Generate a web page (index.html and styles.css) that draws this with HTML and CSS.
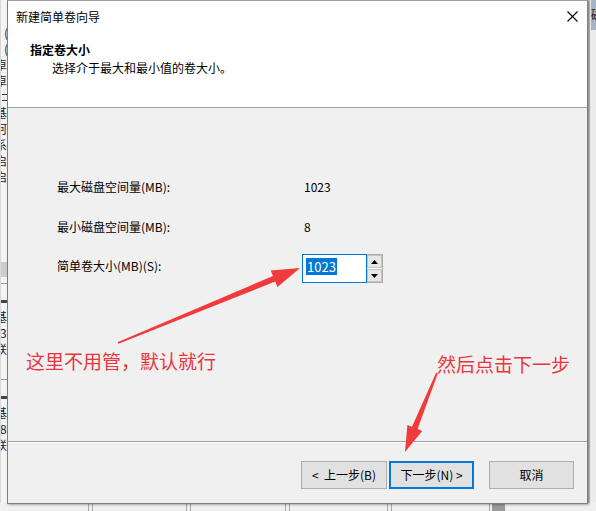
FILE: index.html
```html
<!DOCTYPE html>
<html lang="zh-CN">
<head>
<meta charset="utf-8">
<title>新建简单卷向导</title>
<link rel="stylesheet" href="styles.css">
</head>
<body>
<div class="desktop">
  <div class="bgwin">
    <div class="bg-left">
      <div class="bg-list">
        <div class="bl p">(</div>
        <div class="bl p">(</div>
        <div class="bl">卓</div>
        <div class="bl">卓</div>
        <div class="bg-dash"></div>
        <div class="bg-dash"></div>
        <div class="bl">基</div>
        <div class="bl">阿</div>
        <div class="bl">系</div>
        <div class="bl">启</div>
        <div class="bl">启</div>
      </div>
      <div class="bg-thumb"></div>
      <div class="bg-rule"></div>
      <div class="bg-disk">
        <div class="bg-bar"></div>
        <div class="bl">基</div>
        <div class="bl p2">3</div>
        <div class="bl">联</div>
      </div>
      <div class="bg-rule r2"></div>
      <div class="bg-disk">
        <div class="bg-bar"></div>
        <div class="bl">基</div>
        <div class="bl p2">8</div>
        <div class="bl">联</div>
      </div>
    </div>
    <div class="bg-right">
      <div class="bg-right-head">磁</div>
    </div>
    <div class="bg-bottom">
      <span class="vl" style="margin-left:88px"></span>
      <span class="vl" style="margin-left:3px"></span>
      <span class="vl" style="margin-left:93px"></span>
      <span class="vl" style="margin-left:3px"></span>
      <span class="vl" style="margin-left:94px"></span>
      <span class="vl" style="margin-left:3px"></span>
      <span class="vl" style="margin-left:97px"></span>
      <span class="vl" style="margin-left:3px"></span>
      <span class="vl" style="margin-left:97px"></span>
      <span class="vblock"></span>
    </div>
  </div>

  <div class="dialog">
    <div class="titlebar">
      <span class="title">新建简单卷向导</span>
      <svg class="close" width="11" height="11" viewBox="0 0 11 11"><path d="M0.5 0.5 L10.5 10.5 M10.5 0.5 L0.5 10.5" stroke="#000" stroke-width="1.1" fill="none"/></svg>
    </div>
    <div class="header">
      <div class="h-title">指定卷大小</div>
      <div class="h-sub">选择介于最大和最小值的卷大小。</div>
    </div>
    <div class="body">
      <div class="row">
        <div class="label">最大磁盘空间量(MB):</div>
        <div class="value">1023</div>
      </div>
      <div class="row">
        <div class="label">最小磁盘空间量(MB):</div>
        <div class="value">8</div>
      </div>
      <div class="row row-input">
        <div class="label">简单卷大小(MB)(S):</div>
        <div class="spinbox">
          <div class="input"><span class="sel">1023</span></div>
          <div class="spin">
            <div class="spin-btn"><svg width="7" height="4" viewBox="0 0 7 4"><path d="M3.5 0 L7 4 L0 4 Z" fill="#000"/></svg></div>
            <div class="spin-btn"><svg width="7" height="4" viewBox="0 0 7 4"><path d="M0 0 L7 0 L3.5 4 Z" fill="#000"/></svg></div>
          </div>
        </div>
      </div>
    </div>
    <div class="footer">
      <div class="btn">&lt;&nbsp; 上一步(B)</div>
      <div class="btn primary">下一步(N) &gt;</div>
      <div class="btn cancel">取消</div>
    </div>
  </div>

  <div class="note note-left">这里不用管，默认就行</div>
  <div class="note note-right">然后点击下一步</div>

  <svg class="arrows" width="596" height="511" viewBox="0 0 596 511">
    <polygon fill="#f03a3c" points="117.5,342.2 273.0,275.9 270.7,270.4 300,268 277.5,287.0 275.2,281.5 118.5,343.8"/>
    <polygon fill="#f03a3c" points="436.2,372.6 412.0,426.8 407.4,424.9 405,452 422.2,430.9 417.6,429.0 437.8,373.4"/>
  </svg>
</div>
</body>
</html>
```

FILE: styles.css
```css
html, body {
  margin: 0;
  padding: 0;
}

body {
  width: 596px;
  height: 511px;
  overflow: hidden;
  background: #f0f0f0;
  font-family: "Noto Sans CJK SC", "Noto Sans", sans-serif;
  font-size: 12px;
  color: #000;
}

.desktop {
  position: relative;
  width: 596px;
  height: 511px;
  overflow: hidden;
  background: #f0f0f0;
}

/* background window (Disk Management) */
.bgwin {
  position: absolute;
  inset: 0;
  background: #f0f0f0;
}

.bg-left {
  position: absolute;
  left: 0;
  top: 0;
  width: 7px;
  height: 511px;
  overflow: hidden;
  background: #f4f4f4;
  border-left: 1px solid #d8d8d8;
  box-sizing: border-box;
}

.bg-list {
  padding-top: 25px;
  height: 262px;
  box-sizing: border-box;
}

.bl {
  height: 16px;
  line-height: 16px;
  margin-left: -6px;
  white-space: nowrap;
  color: #222;
}

.bl.p {
  margin-left: 3px;
}

.bl.p2 {
  margin-left: -1px;
}

.bg-dash {
  width: 5px;
  height: 1px;
  background: #333;
  margin: 5px 0 4px 1px;
}

.bg-thumb {
  height: 15px;
  background: #cdcdcd;
}

.bg-rule {
  height: 1px;
  background: #9a9a9a;
  margin-top: 6px;
}

.bg-rule.r2 {
  margin-top: 22px;
}

.bg-disk {
  padding-top: 16px;
}

.bg-bar {
  height: 3px;
  background: #3c4a44;
  margin-bottom: 6px;
}

.bg-right {
  position: absolute;
  right: 0;
  top: 0;
  width: 8px;
  height: 511px;
  overflow: hidden;
  background: #ececec;
  border-left: 2px solid #b9b9b9;
  box-sizing: border-box;
}

.bg-right-head {
  height: 30px;
  line-height: 30px;
  background: #a6b4c6;
  color: #111;
  white-space: nowrap;
  margin-left: 1px;
}

.bg-bottom {
  position: absolute;
  left: 0;
  bottom: 0;
  width: 596px;
  height: 8px;
  display: flex;
  background: #f0f0f0;
}

.vl {
  width: 1px;
  height: 8px;
  background: #a8a8a8;
}

.vblock {
  width: 13px;
  height: 8px;
  margin-left: 2px;
  background: #9a9a9a;
}

/* dialog */
.dialog {
  position: absolute;
  left: 7px;
  top: 0;
  width: 581px;
  height: 504px;
  box-sizing: border-box;
  border: 1px solid #7f7f7f;
  border-top-color: #a0a0a0;
  background: #f0f0f0;
  display: flex;
  flex-direction: column;
  box-shadow: 1px 1px 2px rgba(0, 0, 0, 0.3);
}

.titlebar {
  height: 30px;
  flex: none;
  background: #fff;
  display: flex;
  align-items: center;
  justify-content: space-between;
  padding: 0 9px 0 8px;
  box-sizing: border-box;
}

.title {
  line-height: 16px;
  padding-top: 1px;
}

.close {
  display: block;
  margin-top: 1px;
}

.header {
  height: 77px;
  flex: none;
  box-sizing: border-box;
  background: #fff;
  border-bottom: 1px solid #a0a0a0;
  padding: 11px 0 0 22px;
}

.h-title {
  font-weight: bold;
  line-height: 16px;
}

.h-sub {
  line-height: 16px;
  margin-top: 2px;
  padding-left: 22px;
}

.body {
  height: 333px;
  flex: none;
  box-sizing: border-box;
  padding: 71px 0 0 49px;
  display: flex;
  flex-direction: column;
}

.row {
  display: flex;
  align-items: flex-start;
  line-height: 16px;
}

.row + .row {
  margin-top: 24px;
}

.row.row-input {
  margin-top: 19px;
}

.label {
  width: 245px;
  flex: none;
}

.row-input .label {
  margin-top: 4px;
}

.value {
  padding-left: 2px;
}

.spinbox {
  display: flex;
  height: 29px;
}

.input {
  width: 65px;
  height: 29px;
  box-sizing: border-box;
  border: 1px solid #0078d7;
  background: #fff;
  padding: 3px 0 0 3px;
}

.sel {
  display: inline-block;
  background: #0078d7;
  color: #fff;
  font-size: 13px;
  line-height: 17px;
  padding: 0 1px 0 1px;
}

.spin {
  width: 16px;
  height: 29px;
  box-sizing: border-box;
  border: 1px solid #acacac;
  border-left: none;
  display: flex;
  flex-direction: column;
  gap: 1px;
  background: #fff;
}

.spin-btn {
  flex: 1;
  background: #e6e6e6;
  border: 1px solid #c4c4c4;
  display: flex;
  align-items: center;
  justify-content: center;
}

.spin-btn svg {
  display: block;
}

.footer {
  height: 62px;
  flex: none;
  box-sizing: border-box;
  border-top: 1px solid #a0a0a0;
  box-shadow: inset 0 1px 0 #fff;
  padding: 19px 13px 0 0;
  display: flex;
  justify-content: flex-end;
  align-items: flex-start;
}

.btn {
  width: 86px;
  height: 28px;
  box-sizing: border-box;
  border: 1px solid #adadad;
  background: #e1e1e1;
  display: flex;
  align-items: center;
  justify-content: center;
  line-height: 16px;
}

.btn.primary {
  width: 85px;
  margin-left: 2px;
  border: 2px solid #0078d7;
}

.btn.cancel {
  width: 85px;
  margin-left: 15px;
}

/* annotations */
.note {
  position: absolute;
  color: #e8363f;
  font-size: 19px;
  line-height: 24px;
  white-space: nowrap;
}

.note-left {
  left: 26px;
  top: 349px;
}

.note-right {
  left: 437px;
  top: 352px;
}

.arrows {
  position: absolute;
  left: 0;
  top: 0;
  pointer-events: none;
}
```
